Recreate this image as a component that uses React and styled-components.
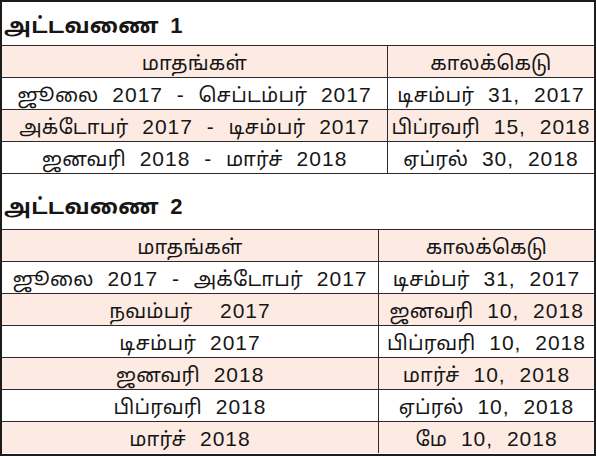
import React from 'react';
import styled, { createGlobalStyle } from 'styled-components';

const GlobalStyle = createGlobalStyle`
  html, body {
    margin: 0;
    padding: 0;
    background: #ffffff;
  }
`;

const Frame = styled.div`
  width: 596px;
  height: 456px;
  box-sizing: border-box;
  border: 2px solid #1c1c1c;
  display: flex;
  flex-direction: column;
  font-family: "Liberation Sans", "Noto Sans Tamil", "Lohit Tamil", Arial, sans-serif;
  color: #161616;
  overflow: hidden;
`;

const Heading = styled.div`
  height: ${p => p.h}px;
  flex: none;
  display: flex;
  align-items: flex-end;
  padding: 0 0 ${p => p.pb}px 2px;
  box-sizing: border-box;
  font-size: 22px;
  line-height: 26px;
  font-weight: bold;
  letter-spacing: 0.3px;
  word-spacing: 5px;
  white-space: pre;
`;

const Table = styled.div`
  display: grid;
  grid-template-columns: ${p => p.split}px 1fr;
  grid-auto-rows: 32px;
  border-bottom: ${p => (p.last ? 'none' : '1px solid #2a2a2a')};
  flex: ${p => (p.last ? '1' : 'none')};
`;

const Cell = styled.div`
  display: flex;
  align-items: center;
  justify-content: center;
  padding-top: 2px;
  box-sizing: border-box;
  border-top: 1px solid #2a2a2a;
  border-left: ${p => (p.second ? '1.5px solid #2a2a2a' : 'none')};
  background: ${p => (p.shaded ? '#fdebe3' : '#ffffff')};
`;

const CellText = styled.span`
  font-size: 20px;
  line-height: 24px;
  letter-spacing: 0.2px;
  word-spacing: 8px;
  white-space: pre;
`;

const Num = styled.span`
  font-size: 21px;
  letter-spacing: 1px;
`;

const table1 = [
  ['மாதங்கள்', 'காலக்கெடு'],
  ['ஜூலை 2017 - செப்டம்பர் 2017', 'டிசம்பர் 31, 2017'],
  ['அக்டோபர் 2017 - டிசம்பர் 2017', 'பிப்ரவரி 15, 2018'],
  ['ஜனவரி 2018 - மார்ச் 2018', 'ஏப்ரல் 30, 2018'],
];

const table2 = [
  ['மாதங்கள்', 'காலக்கெடு'],
  ['ஜூலை 2017 - அக்டோபர் 2017', 'டிசம்பர் 31, 2017'],
  ['நவம்பர்  2017', 'ஜனவரி 10, 2018'],
  ['டிசம்பர் 2017', 'பிப்ரவரி 10, 2018'],
  ['ஜனவரி 2018', 'மார்ச் 10, 2018'],
  ['பிப்ரவரி 2018', 'ஏப்ரல் 10, 2018'],
  ['மார்ச் 2018', 'மே 10, 2018'],
];

// digits come out wider than the tamil letters in the original, so size them apart
const withNums = text =>
  text.split(/([\d,-]+)/).map((part, i) =>
    /[\d,-]/.test(part) ? <Num key={i}>{part}</Num> : part
  );

const Schedule = ({ rows, split, last }) => (
  <Table split={split} last={last}>
    {rows.map((row, i) => (
      <React.Fragment key={i}>
        <Cell shaded={i % 2 === 0}>
          <CellText>{withNums(row[0])}</CellText>
        </Cell>
        <Cell second shaded={i % 2 === 0}>
          <CellText>{withNums(row[1])}</CellText>
        </Cell>
      </React.Fragment>
    ))}
  </Table>
);

const App = () => {
  return (
    <>
      <GlobalStyle />
      <Frame>
        <Heading h={43} pb={6}>அட்டவணை 1</Heading>
        <Schedule rows={table1} split={385} />
        <Heading h={55} pb={9}>அட்டவணை 2</Heading>
        <Schedule rows={table2} split={376} last />
      </Frame>
    </>
  );
};

export default App;
